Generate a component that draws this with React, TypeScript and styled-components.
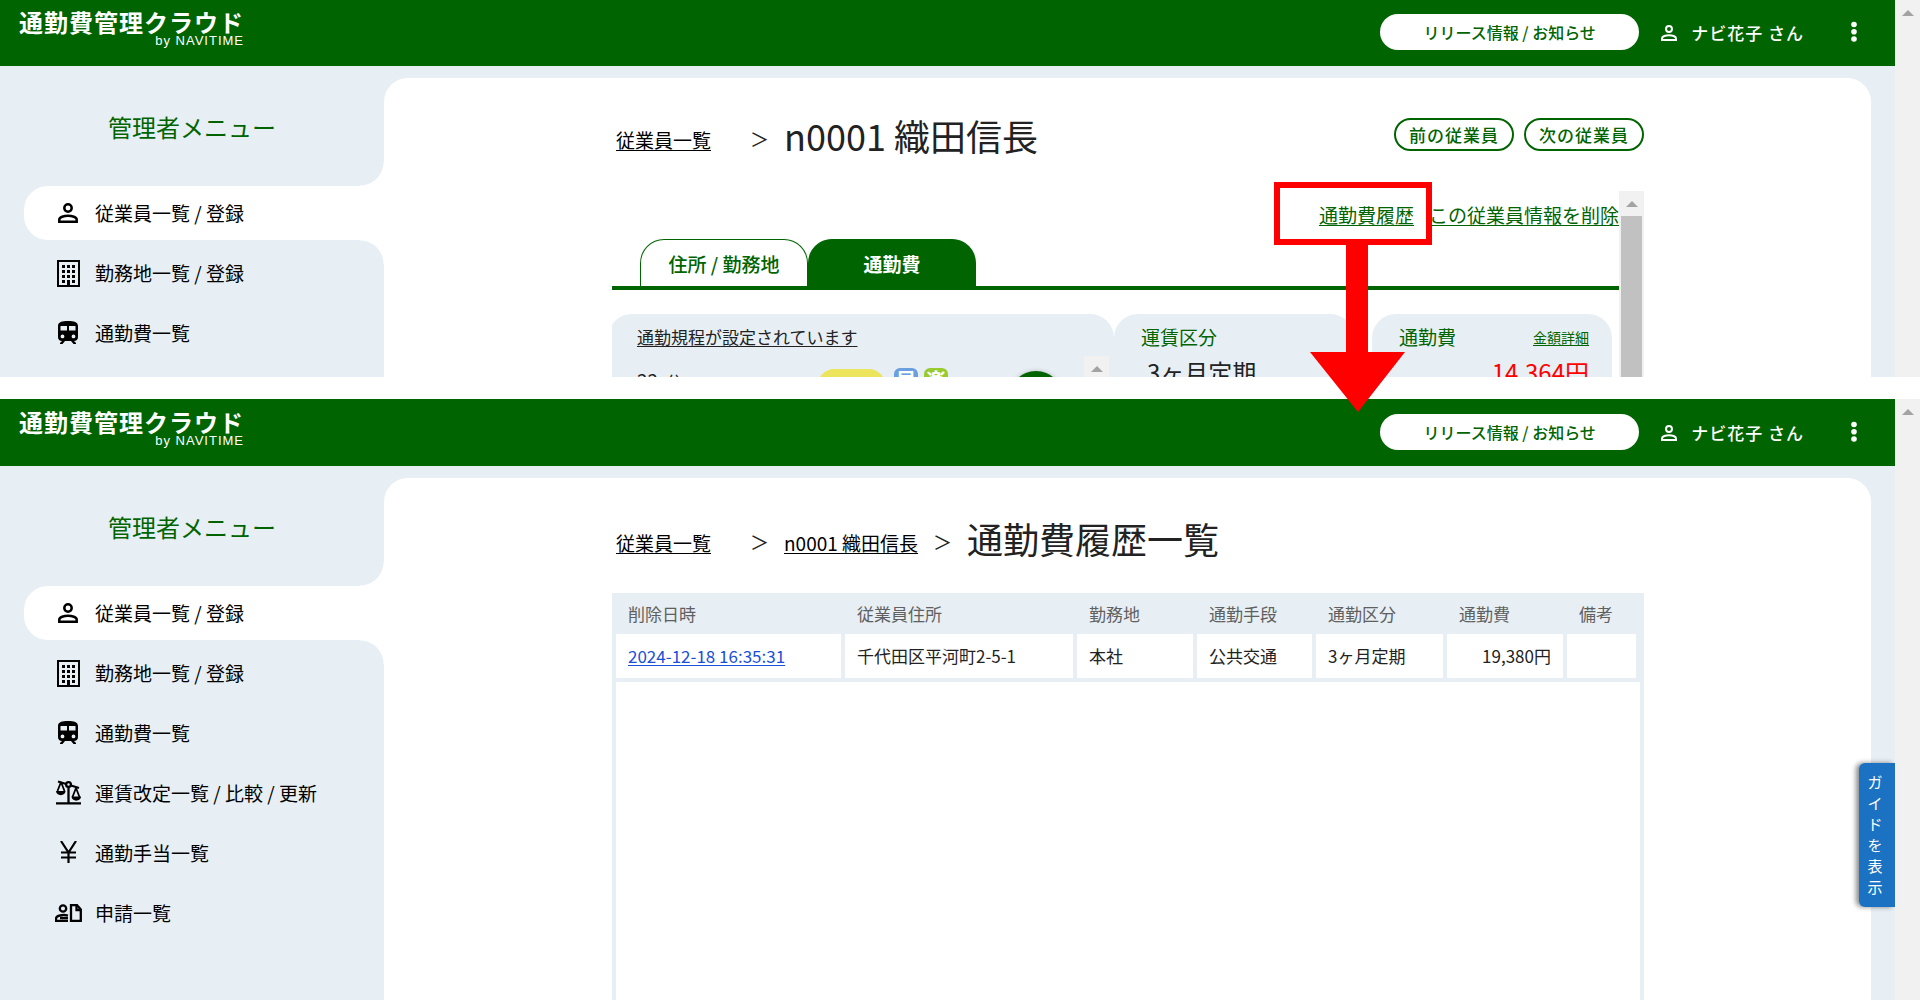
import React from "react";
import styled, { createGlobalStyle, css } from "styled-components";

const green = "#006400";
const mist = "#e7eff5";

const Global = createGlobalStyle`
  *, *::before, *::after { box-sizing: border-box; }
  body {
    margin: 0;
    background: #fff;
    color: #222;
    font-family: "Noto Sans CJK JP", sans-serif;
    font-size: 19px;
    line-height: 28px;
  }
  h1, h2, p, ul { margin: 0; padding: 0; font-weight: 400; }
  ul { list-style: none; }
  a { color: inherit; text-underline-offset: 2px; }
  button { font-family: inherit; cursor: pointer; }
  svg { display: block; flex: none; }
`;

const Page = styled.div`
  position: relative;
  display: flex;
  flex-direction: column;
  height: 100vh;
  overflow: hidden;
`;

const Gap = styled.div`
  flex: 0 0 22px;
`;

const Frame = styled.section<{ $grow?: boolean }>`
  display: grid;
  grid-template-columns: minmax(0, 1fr) 25px;
  overflow: hidden;
  ${(p) => (p.$grow ? "flex: 1 1 0;" : "flex: 0 0 377px;")}
`;

const Screen = styled.div<{ $edge?: boolean }>`
  position: relative;
  display: flex;
  flex-direction: column;
  min-height: 0;
  overflow: hidden;
  ${(p) => p.$edge && `border-top: 1px solid ${green};`}
`;

const Track = styled.div`
  display: flex;
  flex-direction: column;
  align-items: center;
  background: #f1f1f1;
`;

const TrackArrow = styled.div`
  display: flex;
  align-items: center;
  justify-content: center;
  height: 25px;
  &::before {
    content: "";
    border: 6px solid transparent;
    border-top: 0;
    border-bottom-color: #a3a3a3;
  }
`;

const TrackThumb = styled.div`
  width: 21px;
  flex: 1;
  background: #c1c1c1;
`;

const Header = styled.header`
  display: flex;
  align-items: center;
  flex: 0 0 66px;
  padding: 0 27px 3px 19px;
  background: ${green};
  color: #fff;
`;

const Brand = styled.a`
  display: flex;
  flex-direction: column;
  align-items: flex-end;
  align-self: flex-start;
  padding-top: 10px;
  margin-right: auto;
  color: #fff;
  text-decoration: none;
`;

const BrandName = styled.span`
  font-size: 24px;
  line-height: 24px;
  font-weight: 700;
  letter-spacing: 1px;
`;

const BrandBy = styled.span`
  font-family: "Liberation Sans", sans-serif;
  font-size: 13px;
  line-height: 13px;
  letter-spacing: 1px;
`;

const NewsButton = styled.button`
  width: 259px;
  height: 36px;
  padding: 0;
  border: 0;
  border-radius: 18px;
  background: #fff;
  color: ${green};
  font-size: 16px;
  font-weight: 500;
`;

const User = styled.div`
  display: flex;
  align-items: center;
  gap: 14px;
  margin: 3px 36px 0 22px;
  font-size: 17px;
  font-weight: 500;
  letter-spacing: 1px;
`;

const IconButton = styled.button`
  display: flex;
  padding: 0;
  border: 0;
  background: none;
  color: #fff;
`;

const Body = styled.div`
  display: grid;
  grid-template-columns: 384px minmax(0, 1fr);
  flex: 1;
  min-height: 0;
  padding-right: 24px;
  background: ${mist};
`;

const Side = styled.nav`
  padding: 43px 0 0 24px;
`;

const SideTitle = styled.h2`
  padding: 0 24px 0 0;
  color: ${green};
  font-size: 24px;
  line-height: 36px;
  text-align: center;
`;

const Menu = styled.ul`
  display: flex;
  flex-direction: column;
  gap: 6px;
  padding-top: 41px;
`;

const MenuItem = styled.li<{ $active?: boolean }>`
  position: relative;
  border-radius: 24px 0 0 24px;
  ${(p) =>
    p.$active &&
    css`
      background: #fff;
      &::before,
      &::after {
        content: "";
        position: absolute;
        right: 0;
        width: 24px;
        height: 24px;
      }
      &::before {
        bottom: 100%;
        background: radial-gradient(circle at 0 0, transparent 23px, #fff 24px);
      }
      &::after {
        top: 100%;
        background: radial-gradient(circle at 0 100%, transparent 23px, #fff 24px);
      }
    `}
`;

const MenuLink = styled.a`
  display: grid;
  grid-template-columns: 28px 1fr;
  align-items: center;
  gap: 13px;
  height: 54px;
  padding-left: 30px;
  color: #000;
  text-decoration: none;
  svg { justify-self: center; }
`;

const Main = styled.main`
  display: flex;
  flex-direction: column;
  min-width: 0;
  min-height: 0;
  margin-top: 12px;
  padding: 0 227px 0 228px;
  border-radius: 24px 24px 0 0;
  background: #fff;
  overflow: hidden;
`;

const Crumbs = styled.div<{ $sub?: boolean }>`
  display: flex;
  align-items: center;
  padding: ${(p) => (p.$sub ? "34px" : "31px")} 0 0 4px;
`;

const CrumbLink = styled.a`
  padding-top: 10px;
  color: #000;
`;

const Arrow = styled.span<{ $wide?: boolean }>`
  margin: 0 15px 0 ${(p) => (p.$wide ? "39px" : "15px")};
  padding-top: 8px;
`;

const Title = styled.h1`
  font-size: 36px;
  line-height: 52px;
`;

const Pager = styled.div`
  display: flex;
  align-self: flex-start;
  gap: 10px;
  margin-left: auto;
  padding-top: 9px;
`;

const PagerButton = styled.button`
  width: 120px;
  height: 33px;
  padding: 0;
  border: 2px solid ${green};
  border-radius: 17px;
  background: #fff;
  color: ${green};
  font-size: 17px;
  line-height: 28px;
  font-weight: 500;
  letter-spacing: 1px;
`;

const Detail = styled.div`
  display: grid;
  grid-template-columns: minmax(0, 1fr) 25px;
  flex: 1;
  min-height: 0;
  margin-top: 30px;
`;

const DetailPane = styled.div`
  min-width: 0;
  overflow: hidden;
`;

const Actions = styled.div`
  display: flex;
  justify-content: flex-end;
  gap: 15px;
  padding-top: 10px;
  color: ${green};
  white-space: nowrap;
`;

const Tabs = styled.div`
  display: flex;
  margin-top: 10px;
  padding-left: 28px;
  border-bottom: 4px solid ${green};
`;

const Tab = styled.button<{ $active?: boolean }>`
  width: 168px;
  height: 47px;
  padding: 0;
  border: 1px solid ${green};
  border-bottom: 0;
  border-radius: 24px 24px 0 0;
  background: ${(p) => (p.$active ? green : "#fff")};
  color: ${(p) => (p.$active ? "#fff" : green)};
  font-size: 19px;
  font-weight: ${(p) => (p.$active ? 700 : 500)};
`;

const Cards = styled.div`
  display: grid;
  grid-template-columns: minmax(0, 1fr) 240px 258px;
  margin: 24px 7px 0 -4px;
`;

const Card = styled.div<{ $last?: boolean; $list?: boolean }>`
  height: 160px;
  margin-left: ${(p) => (p.$last ? "18px" : "0")};
  padding: ${(p) => (p.$list ? "9px 5px 0 29px" : "9px 23px 0 27px")};
  border-radius: 24px;
  background: ${mist};
`;

const Notice = styled.a`
  display: block;
  font-size: 17px;
`;

const RouteRow = styled.div`
  display: grid;
  grid-template-columns: 172px 67px 24px 24px 1fr 25px;
  align-items: start;
  padding-top: 5px;
`;

const Minutes = styled.span`
  padding-top: 10px;
  small { padding-left: 8px; font-size: 16px; }
`;

const FarePill = styled.span`
  height: 32px;
  margin: 13px -9px 0 9px;
  border-radius: 16px;
  background: #ebe45c;
  color: #a5c83c;
  font-size: 16px;
  line-height: 26px;
  font-weight: 500;
  text-align: center;
`;

const Badge = styled.span<{ $bg: string; $shift: number }>`
  height: 24px;
  margin: 12px -${(p) => p.$shift}px 0 ${(p) => p.$shift}px;
  border-radius: 6px;
  background: ${(p) => p.$bg};
  color: #fff;
  font-size: 20px;
  line-height: 23px;
  font-weight: 700;
  text-align: center;
`;

const Dot = styled.span`
  justify-self: end;
  width: 54px;
  height: 54px;
  margin: 15px 21px 0 0;
  border-radius: 50%;
  background: ${green};
  box-shadow: 0 0 5px rgba(0, 0, 0, 0.2);
`;

const CardHead = styled.div`
  display: flex;
  align-items: center;
  justify-content: space-between;
  color: ${green};
`;

const SmallLink = styled.a`
  font-size: 14px;
`;

const Value = styled.p<{ $red?: boolean }>`
  padding: ${(p) => (p.$red ? "3px 0 0" : "3px 0 0 6px")};
  font-size: 24px;
  line-height: 36px;
  text-align: ${(p) => (p.$red ? "right" : "left")};
  color: ${(p) => (p.$red ? "#f00" : "inherit")};
`;

const TableBox = styled.div`
  display: flex;
  flex-direction: column;
  flex: 1;
  min-height: 0;
  margin-top: 29px;
  border: 4px solid ${mist};
  border-top: 0;
  border-bottom: 0;
`;

const Table = styled.table`
  width: 100%;
  table-layout: fixed;
  border-collapse: separate;
  border-spacing: 0;
  font-size: 17px;
  border-bottom: 4px solid ${mist};
`;

const Th = styled.th`
  height: 41px;
  padding: 0 0 0 12px;
  background: ${mist};
  color: #606060;
  font-weight: 400;
  text-align: left;
`;

const Td = styled.td<{ $right?: boolean }>`
  height: 44px;
  padding: 0 12px;
  border-right: 4px solid ${mist};
  text-align: ${(p) => (p.$right ? "right" : "left")};
  white-space: nowrap;
`;

const RowLink = styled.a`
  color: #1a4fd6;
`;

const Guide = styled.button`
  position: absolute;
  right: 0;
  top: 363px;
  display: flex;
  flex-direction: column;
  align-items: center;
  justify-content: center;
  width: 36px;
  height: 144px;
  padding: 0 4px 2px 0;
  border: 0;
  border-radius: 6px 0 0 6px;
  background: #1b72c2;
  box-shadow: -3px 0 5px rgba(0, 0, 0, 0.45);
  color: #fff;
  font-size: 15px;
  line-height: 21px;
`;

const Callout = styled.div`
  position: absolute;
  top: 182px;
  right: 488px;
  width: 158px;
  height: 63px;
  border: 6px solid #f00;
`;

const CalloutArrow = styled.svg`
  position: absolute;
  top: 244px;
  right: 515px;
`;

const PersonIcon = ({ size }: { size: number }) => (
  <svg width={size} height={size} viewBox="0 0 20 20" fill="none" stroke="currentColor" strokeWidth="2.5" aria-hidden="true">
    <circle cx="10" cy="5" r="3.700" />
    <path d="M1.300 18.700v-2.200c0-2.200 4.800-3.800 8.700-3.800s8.700 1.600 8.700 3.800v2.200z" />
  </svg>
);

const BuildingIcon = () => (
  <svg width="23" height="27" viewBox="0 0 23 27" aria-hidden="true">
    <rect x="1" y="1" width="21" height="25" fill="none" stroke="#000" strokeWidth="2" />
    {[5, 10, 15].map((x) =>
      [5, 10, 15, 20].map((y) => <rect key={`${x}-${y}`} x={x} y={y} width="3" height="3" />)
    )}
    <rect x="10" y="20" width="3" height="6" />
  </svg>
);

const TrainIcon = () => (
  <svg width="20" height="25" viewBox="0 0 20 25" aria-hidden="true">
    <path
      fillRule="evenodd"
      d="M0 5C0 1 4 0 10 0s10 1 10 5v11c0 2.400-1.600 4-4 4l2 2v1h-2.500l-2.500-3H7l-2.500 3H2v-1l2-2c-2.400 0-4-1.600-4-4zM2.500 5v4.500H9V5zM11 5v4.500h6.500V5zM4.500 13.500a1.900 1.900 0 1 0 0 3.800 1.900 1.900 0 0 0 0-3.800zm11 0a1.900 1.900 0 1 0 0 3.800 1.900 1.900 0 0 0 0-3.800z"
    />
  </svg>
);

const ScaleIcon = () => (
  <svg width="25" height="27" viewBox="0 0 25 27" fill="none" stroke="#000" strokeWidth="2.300" aria-hidden="true">
    <path d="M0 23.300h25M12.500 7v16M2 1.500l8 2.500M15 5.500l8 2.500" />
    <circle cx="12.500" cy="4.500" r="2.400" />
    <path d="M5 2L1.500 11M5 2l3.500 9M20 8l-3.500 9M20 8l3.500 9" strokeWidth="1.800" />
    <path d="M0 11h9.500c0 5.500-9.500 5.500-9.500 0zM15.500 16.500H25c0 5.500-9.500 5.500-9.500 0z" fill="#000" stroke="none" />
  </svg>
);

const YenIcon = () => (
  <svg width="17" height="24" viewBox="0 0 17 24" fill="none" stroke="#000" strokeWidth="2.200" aria-hidden="true">
    <path d="M1 0l7.500 11.500L16 0M8.500 11v11M1 11.500h15M1 16.500h15" />
  </svg>
);

const RequestIcon = () => (
  <svg width="27" height="18" viewBox="0 0 27 18" fill="none" stroke="#000" strokeWidth="2.300" aria-hidden="true">
    <circle cx="8" cy="4.500" r="3.200" />
    <path d="M13 11.500c-5-1.500-12 0-12 3v2.300h12M5 14h8" />
    <path d="M16 1.200h6l3.800 4.300v11.300H16z" />
    <path d="M21.500 1v5H26" />
  </svg>
);

const menu = [
  { label: "従業員一覧 / 登録", icon: <PersonIcon size={20} /> },
  { label: "勤務地一覧 / 登録", icon: <BuildingIcon /> },
  { label: "通勤費一覧", icon: <TrainIcon /> },
  { label: "運賃改定一覧 / 比較 / 更新", icon: <ScaleIcon /> },
  { label: "通勤手当一覧", icon: <YenIcon /> },
  { label: "申請一覧", icon: <RequestIcon /> },
];

const TopBar = () => (
  <Header>
    <Brand href="#">
      <BrandName>通勤費管理クラウド</BrandName>
      <BrandBy>by NAVITIME</BrandBy>
    </Brand>
    <NewsButton>リリース情報 / お知らせ</NewsButton>
    <User>
      <PersonIcon size={16} />
      ナビ花子 さん
    </User>
    <IconButton aria-label="メニュー">
      <svg width="28" height="22" viewBox="0 0 28 22" fill="currentColor">
        <circle cx="14" cy="3.500" r="2.800" />
        <circle cx="14" cy="10.700" r="2.800" />
        <circle cx="14" cy="18" r="2.800" />
      </svg>
    </IconButton>
  </Header>
);

const SideMenu = ({ count }: { count: number }) => (
  <Side>
    <SideTitle>管理者メニュー</SideTitle>
    <Menu>
      {menu.slice(0, count).map((item, i) => (
        <MenuItem key={item.label} $active={i === 0}>
          <MenuLink href="#">
            {item.icon}
            <span>{item.label}</span>
          </MenuLink>
        </MenuItem>
      ))}
    </Menu>
  </Side>
);

export default function App() {
  return (
    <Page>
      <Global />
      <Frame>
        <Screen>
          <TopBar />
          <Body>
            <SideMenu count={3} />
            <Main>
              <Crumbs>
                <CrumbLink href="#">従業員一覧</CrumbLink>
                <Arrow $wide>＞</Arrow>
                <Title>n0001 織田信長</Title>
                <Pager>
                  <PagerButton>前の従業員</PagerButton>
                  <PagerButton>次の従業員</PagerButton>
                </Pager>
              </Crumbs>
              <Detail>
                <DetailPane>
                  <Actions>
                    <a href="#">通勤費履歴</a>
                    <a href="#">この従業員情報を削除</a>
                  </Actions>
                  <Tabs>
                    <Tab>住所 / 勤務地</Tab>
                    <Tab $active>通勤費</Tab>
                  </Tabs>
                  <Cards>
                    <Card $list>
                      <Notice href="#">通勤規程が設定されています</Notice>
                      <RouteRow>
                        <Minutes>
                          22<small>分</small>
                        </Minutes>
                        <FarePill>NAVI</FarePill>
                        <Badge $bg="#6c9fe0" $shift={18}>早</Badge>
                        <Badge $bg="#98cb2e" $shift={24}>楽</Badge>
                        <Dot />
                        <Track>
                          <TrackArrow />
                        </Track>
                      </RouteRow>
                    </Card>
                    <Card>
                      <CardHead>運賃区分</CardHead>
                      <Value>3ヶ月定期</Value>
                    </Card>
                    <Card $last>
                      <CardHead>
                        通勤費<SmallLink href="#">金額詳細</SmallLink>
                      </CardHead>
                      <Value $red>14,364円</Value>
                    </Card>
                  </Cards>
                </DetailPane>
                <Track>
                  <TrackArrow />
                  <TrackThumb />
                </Track>
              </Detail>
            </Main>
          </Body>
        </Screen>
        <Track>
          <TrackArrow />
        </Track>
      </Frame>
      <Gap />
      <Frame $grow>
        <Screen $edge>
          <TopBar />
          <Body>
            <SideMenu count={6} />
            <Main>
              <Crumbs $sub>
                <CrumbLink href="#">従業員一覧</CrumbLink>
                <Arrow $wide>＞</Arrow>
                <CrumbLink href="#">n0001 織田信長</CrumbLink>
                <Arrow>＞</Arrow>
                <Title>通勤費履歴一覧</Title>
              </Crumbs>
              <TableBox>
                <Table>
                  <colgroup>
                    <col style={{ width: "22.36%" }} />
                    <col style={{ width: "22.66%" }} />
                    <col style={{ width: "11.72%" }} />
                    <col style={{ width: "11.62%" }} />
                    <col style={{ width: "12.79%" }} />
                    <col style={{ width: "11.72%" }} />
                    <col />
                  </colgroup>
                  <thead>
                    <tr>
                      {["削除日時", "従業員住所", "勤務地", "通勤手段", "通勤区分", "通勤費", "備考"].map((h) => (
                        <Th key={h} scope="col">{h}</Th>
                      ))}
                    </tr>
                  </thead>
                  <tbody>
                    <tr>
                      <Td><RowLink href="#">2024-12-18 16:35:31</RowLink></Td>
                      <Td>千代田区平河町2-5-1</Td>
                      <Td>本社</Td>
                      <Td>公共交通</Td>
                      <Td>3ヶ月定期</Td>
                      <Td $right>19,380円</Td>
                      <Td />
                    </tr>
                  </tbody>
                </Table>
              </TableBox>
            </Main>
          </Body>
          <Guide>
            {"ガイドを表示".split("").map((c) => (
              <span key={c}>{c}</span>
            ))}
          </Guide>
        </Screen>
        <Track>
          <TrackArrow />
        </Track>
      </Frame>
      <Callout />
      <CalloutArrow width="95" height="168" viewBox="0 0 95 168" fill="#f00" aria-hidden="true">
        <path d="M36 0h22v108h37L48 168 0 108h36z" />
      </CalloutArrow>
    </Page>
  );
}
